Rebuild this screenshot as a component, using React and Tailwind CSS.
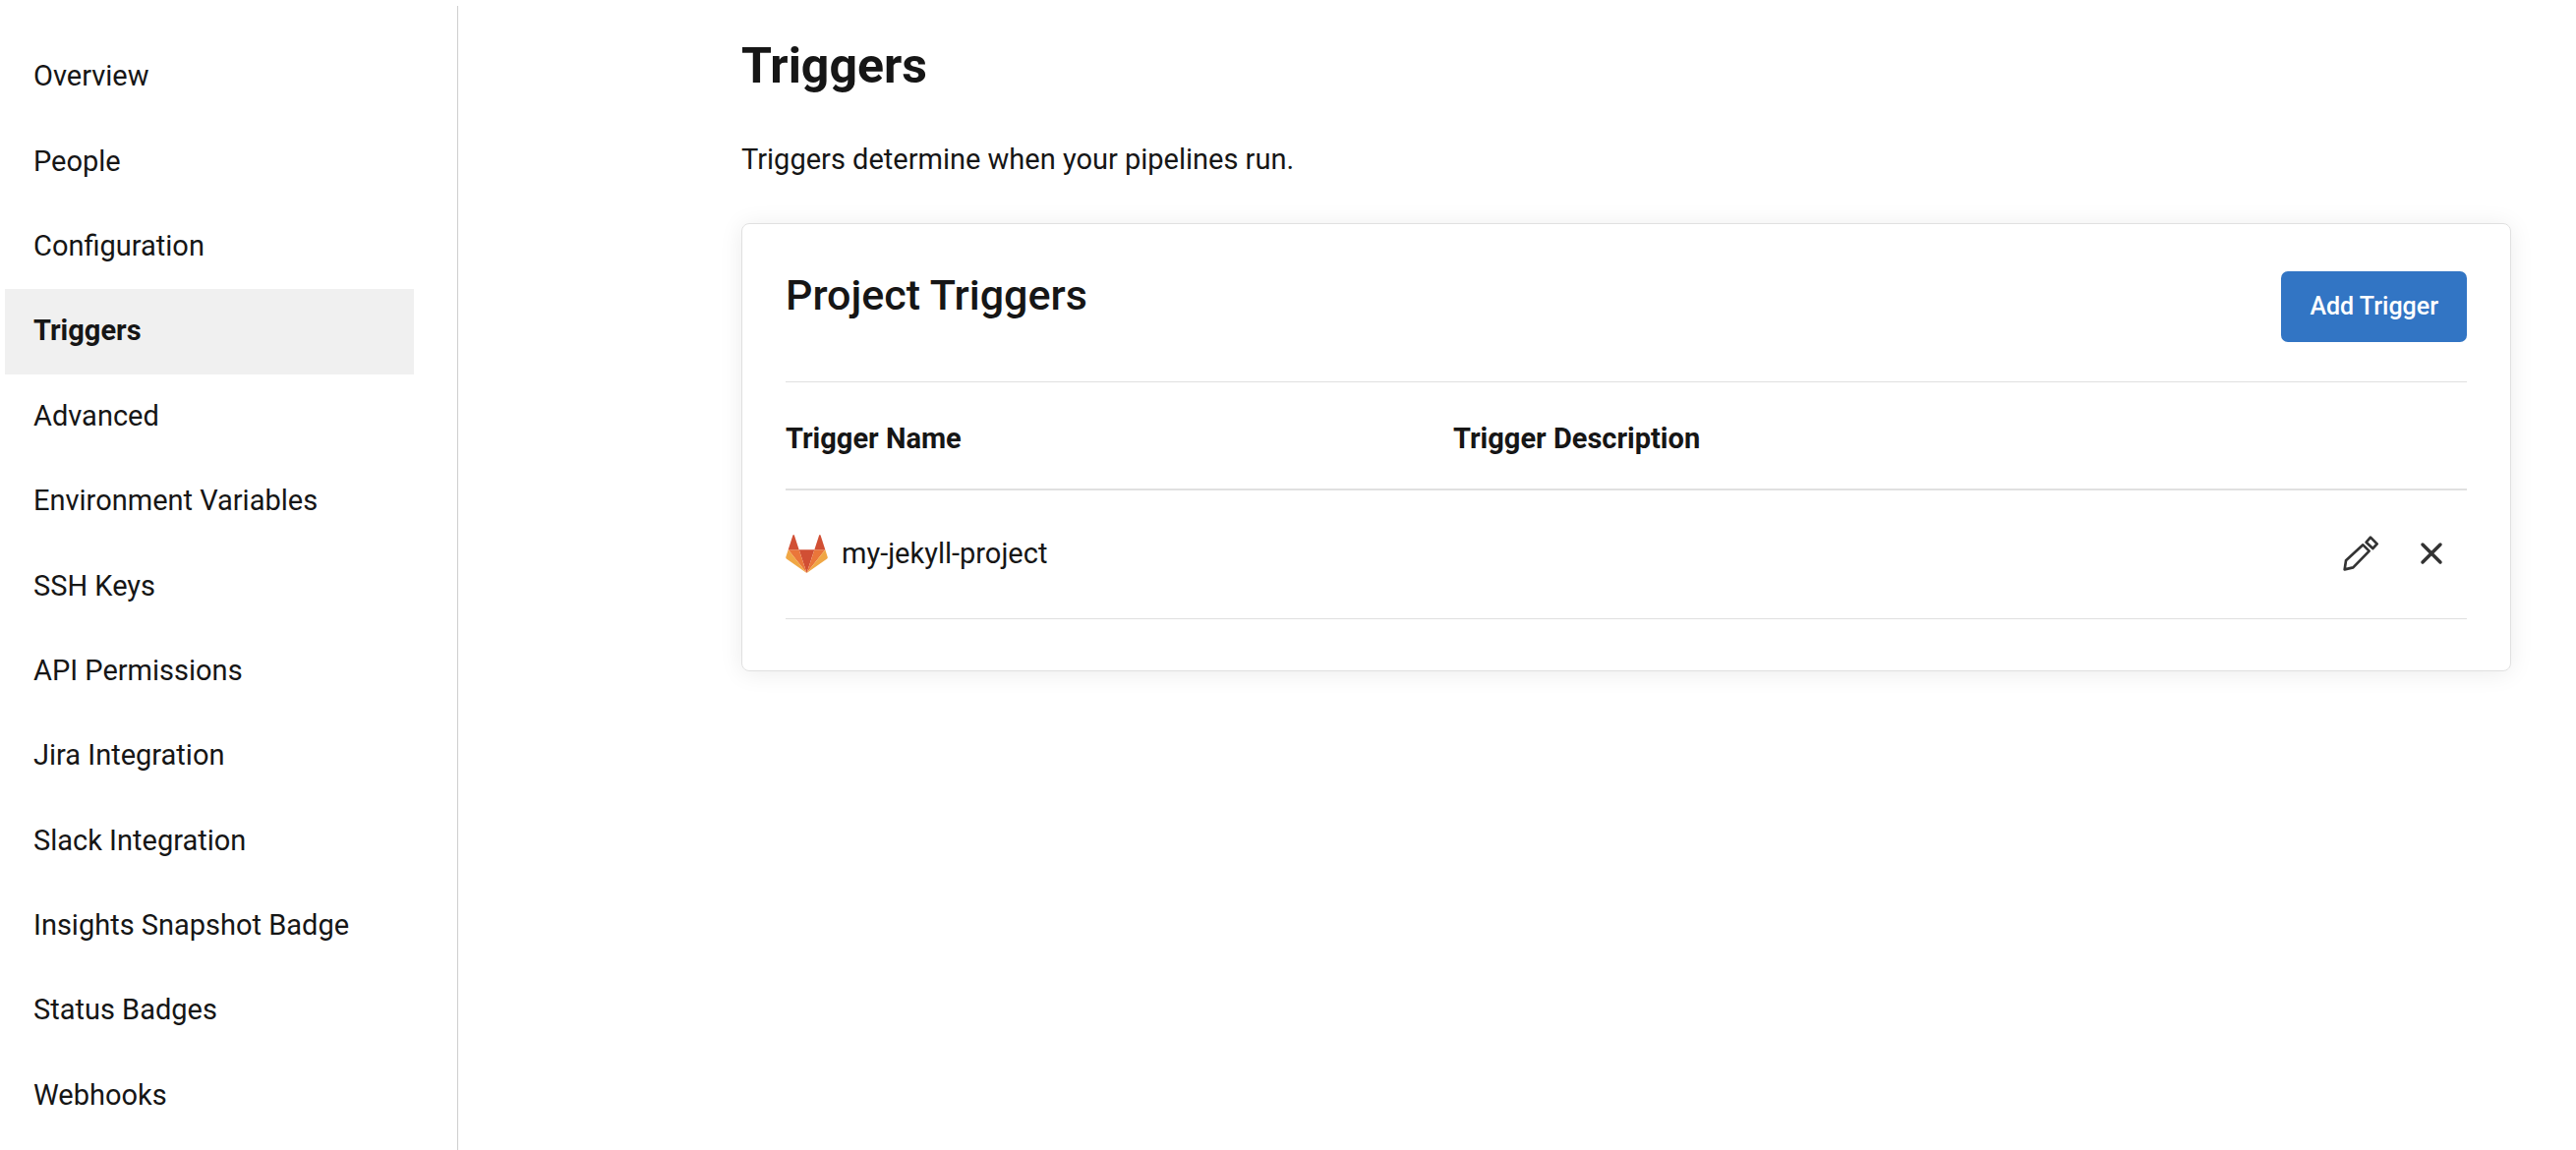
import React from "react";

const navItems = [
  "Overview",
  "People",
  "Configuration",
  "Triggers",
  "Advanced",
  "Environment Variables",
  "SSH Keys",
  "API Permissions",
  "Jira Integration",
  "Slack Integration",
  "Insights Snapshot Badge",
  "Status Badges",
  "Webhooks",
];

const triggers = [{ name: "my-jekyll-project", description: "" }];

function GitLabLogo() {
  return (
    <svg viewBox="0 0 129 117" className="h-[39px] w-[43px] shrink-0" aria-hidden="true">
      <path fill="#d14f34" d="M64.500 117 41 46H88Z" />
      <path fill="#ea763a" d="M64.500 117 41 46H8Z" />
      <path fill="#f0a745" d="M8 46 .8 68c-.6 2 0 4 1.700 5.200L64.500 117Z" />
      <path fill="#d14f34" d="M8 46H41L26.800 2c-.8-2.200-4-2.200-4.700 0Z" />
      <path fill="#ea763a" d="M64.500 117 88 46H121Z" />
      <path fill="#f0a745" d="M121 46l7.200 22c.6 2 0 4-1.700 5.200L64.500 117Z" />
      <path fill="#d14f34" d="M121 46H88L102.200 2c.8-2.200 4-2.200 4.700 0Z" />
    </svg>
  );
}

function PencilIcon() {
  return (
    <svg
      viewBox="0 0 108 108"
      className="size-9"
      fill="none"
      stroke="#333333"
      strokeWidth="8"
      strokeLinejoin="round"
      aria-hidden="true"
    >
      <path d="M5 103 9 76 61 28 80 47 31 97Z" />
      <path d="M84 5 104 25 91 39 71 20Z" />
    </svg>
  );
}

function CloseIcon() {
  return (
    <svg
      viewBox="0 0 24 24"
      className="size-6"
      fill="none"
      stroke="#333333"
      strokeWidth="3.500"
      strokeLinecap="round"
      aria-hidden="true"
    >
      <path d="M3 3 21 21M21 3 3 21" />
    </svg>
  );
}

export default function App() {
  return (
    <div className="flex min-h-screen bg-white font-[Roboto,sans-serif] text-[29px] leading-[44px] text-[#161616]">
      <aside className="flex w-[466px] shrink-0 pt-1.5">
        <nav
          aria-label="Project settings"
          className="flex flex-1 flex-col border-r border-[#cfcfcf] pt-[29px] pr-11 pb-3 pl-[5px]"
        >
          {navItems.map((item) => (
            <a
              key={item}
              href="#"
              aria-current={item === "Triggers" ? "page" : undefined}
              className="flex flex-1 items-center px-[29px] pb-0.5 aria-[current=page]:bg-[#f0f0f0] aria-[current=page]:font-bold"
            >
              {item}
            </a>
          ))}
        </nav>
      </aside>

      <main className="min-w-0 flex-1 pt-[37px] pr-[66px] pl-72">
        <h1 className="text-[50px] leading-[60px] font-bold">Triggers</h1>
        <p className="mt-[43px]">Triggers determine when your pipelines run.</p>

        <section className="mt-[43px] rounded-lg border border-[#e0e0e0] px-11 pt-12 pb-[52px] shadow-[0_2px_24px_rgba(0,0,0,0.08)]">
          <div className="flex items-start justify-between border-b border-[#e0e0e0] pb-10">
            <h2 className="text-[43px] leading-[48px] font-medium">Project Triggers</h2>
            <button
              type="button"
              className="h-[72px] rounded-[7px] bg-[#3275c4] px-[29px] text-[25px] font-medium text-white"
            >
              Add Trigger
            </button>
          </div>

          <table className="w-full table-fixed border-collapse text-left">
            <thead>
              <tr className="border-b-2 border-[#e0e0e0]">
                <th scope="col" className="w-[679px] pt-[35px] pb-[29px] font-bold">
                  Trigger Name
                </th>
                <th scope="col" className="pt-[35px] pb-[29px] font-bold">
                  Trigger Description
                </th>
                <td className="w-40" />
              </tr>
            </thead>
            <tbody>
              {triggers.map((trigger) => (
                <tr key={trigger.name} className="border-b border-[#e0e0e0]">
                  <td className="pt-[42px] pb-11">
                    <div className="flex items-center gap-3.5">
                      <GitLabLogo />
                      {trigger.name}
                    </div>
                  </td>
                  <td>{trigger.description}</td>
                  <td className="pt-[42px] pb-11">
                    <div className="flex items-center justify-end gap-[42px] pr-6">
                      <button type="button" aria-label="Edit trigger">
                        <PencilIcon />
                      </button>
                      <button type="button" aria-label="Delete trigger">
                        <CloseIcon />
                      </button>
                    </div>
                  </td>
                </tr>
              ))}
            </tbody>
          </table>
        </section>
      </main>
    </div>
  );
}
